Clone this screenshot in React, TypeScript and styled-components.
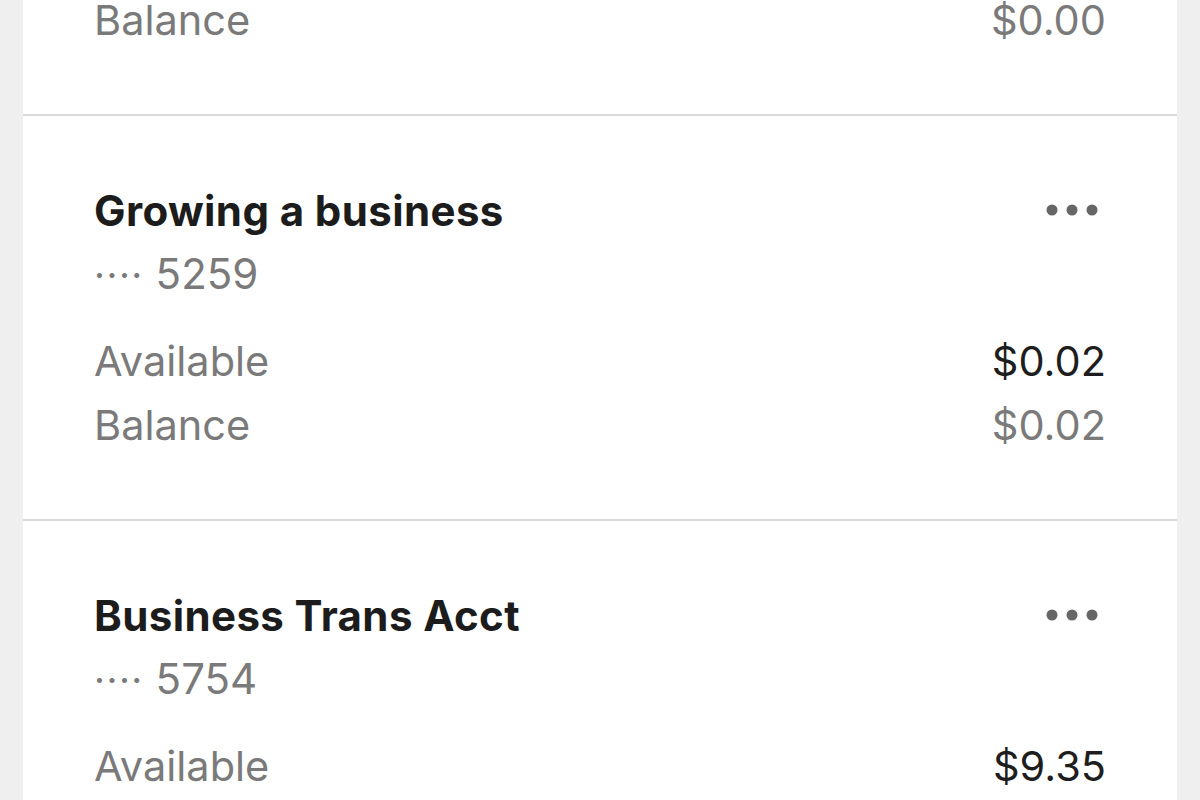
import React from 'react';
import styled, { createGlobalStyle } from 'styled-components';

type Account = {
  name: string;
  last4: string;
  available: string;
  balance: string;
};

const accounts: Account[] = [
  { name: 'Growing a business', last4: '5259', available: '$0.02', balance: '$0.02' },
  { name: 'Business Trans Acct', last4: '5754', available: '$9.35', balance: '$9.35' },
];

const GlobalStyle = createGlobalStyle`
  html, body {
    margin: 0;
    padding: 0;
    background: #efefef;
    font-family: Inter, "Liberation Sans", sans-serif;
    overflow: hidden;
  }
`;

const MoreDots: React.FC = () => (
  <DotsButton aria-label="More">
    <svg width="56" height="12" viewBox="0 0 56 12">
      <circle cx="7" cy="6" r="5.5" fill="#666" />
      <circle cx="27" cy="6" r="5.5" fill="#666" />
      <circle cx="47" cy="6" r="5.5" fill="#666" />
    </svg>
  </DotsButton>
);

const AccountSection: React.FC<{ account: Account }> = ({ account }) => (
  <Section>
    <TitleRow>
      <Title>{account.name}</Title>
      <MoreDots />
    </TitleRow>
    <Mask>
      <MaskDots>····</MaskDots> {account.last4}
    </Mask>
    <Amounts>
      <Row>
        <Label>Available</Label>
        <Amount $strong>{account.available}</Amount>
      </Row>
      <Row>
        <Label>Balance</Label>
        <Amount>{account.balance}</Amount>
      </Row>
    </Amounts>
  </Section>
);

const App: React.FC = () => {
  return (
    <>
      <GlobalStyle />
      <Page>
        <Card>
          <TailSection>
            <Row>
              <Label>Balance</Label>
              <Amount>$0.00</Amount>
            </Row>
          </TailSection>
          {accounts.map((a) => (
            <AccountSection key={a.last4} account={a} />
          ))}
        </Card>
      </Page>
    </>
  );
};

const Page = styled.div`
  height: 800px;
  padding: 0 23px;
  overflow: hidden;
`;

const Card = styled.div`
  background: #ffffff;
  margin-top: -12px;
`;

const TailSection = styled.div`
  padding: 0 71px 62px 71px;
`;

const Section = styled.div`
  border-top: 2px solid #d9d9d9;
  padding: 62px 71px 62px 71px;
`;

const TitleRow = styled.div`
  display: flex;
  align-items: center;
  justify-content: space-between;
  height: 64px;
`;

const Title = styled.div`
  font-size: 42px;
  font-weight: 700;
  color: #1c1c1c;
  letter-spacing: 0.4px;
`;

const DotsButton = styled.div`
  display: flex;
  align-items: center;
  padding-right: 5px;
`;

const Mask = styled.div`
  height: 64px;
  line-height: 64px;
  font-size: 42px;
  color: #7a7a7a;
`;

const MaskDots = styled.span`
  font-size: 38px;
  letter-spacing: 1.5px;
`;

const Amounts = styled.div`
  margin-top: 23px;
`;

const Row = styled.div`
  display: flex;
  justify-content: space-between;
  align-items: center;
  height: 64px;
  font-size: 41.5px;
`;

const Label = styled.span`
  color: #7a7a7a;
`;

const Amount = styled.span<{ $strong?: boolean }>`
  color: ${(p) => (p.$strong ? '#1e1e1e' : '#7a7a7a')};
`;

export default App;
